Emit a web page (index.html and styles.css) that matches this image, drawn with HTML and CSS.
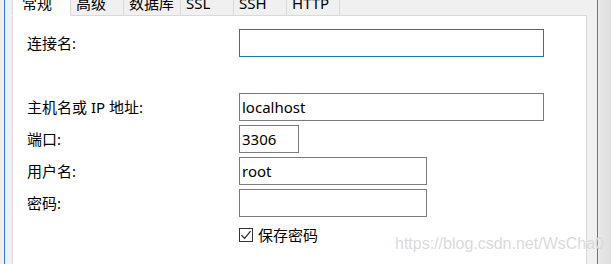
FILE: index.html
```html
<!DOCTYPE html>
<html lang="zh">
<head>
<meta charset="utf-8">
<title>连接</title>
<link rel="stylesheet" href="styles.css">
</head>
<body>
<div class="window">
  <div class="dialog">
    <div class="tabs">
      <div class="tab active"><span>常规</span></div>
      <div class="tab"><span>高级</span></div>
      <div class="tab wide"><span>数据库</span></div>
      <div class="tab"><span>SSL</span></div>
      <div class="tab"><span>SSH</span></div>
      <div class="tab"><span>HTTP</span></div>
      <div class="tab-fill"></div>
    </div>
    <div class="panel">
      <div class="form">
        <label class="lbl">连接名:</label>
        <div class="field w-full focus"></div>
        <div class="spacer"></div>
        <label class="lbl">主机名或 IP 地址:</label>
        <div class="field w-full">localhost</div>
        <label class="lbl">端口:</label>
        <div class="field w-port">3306</div>
        <label class="lbl">用户名:</label>
        <div class="field w-mid">root</div>
        <label class="lbl">密码:</label>
        <div class="field w-mid"></div>
        <div class="lbl"></div>
        <div class="check">
          <span class="box"><svg width="12" height="12" viewBox="0 0 12 12"><path d="M1.5 6.2 L4.6 9.4 L10.6 2.2" fill="none" stroke="#222" stroke-width="1.2"/></svg></span>
          <span>保存密码</span>
        </div>
      </div>
    </div>
  </div>
</div>
<div class="watermark">https://blog.csdn.net/WsCha0</div>
</body>
</html>
```
FILE: styles.css
```css
html, body {
  margin: 0;
  height: 264px;
  overflow: hidden;
}
body {
  position: relative;
  background: linear-gradient(to right, #f0f0f0 598px, #e6e6e6 600px, #dfdfdf 611px);
  font-family: "Noto Sans", "Noto Sans CJK SC", sans-serif;
  font-size: 15px;
  color: #000;
}
.window {
  margin-left: 4px;
  width: 594px;
  height: 264px;
  box-sizing: border-box;
  border-left: 1px solid #2a86d0;
  border-right: 1px solid #2a86d0;
  padding: 0 10px 0 7px;
  background: #f0f0f0;
}
.dialog {
  display: flex;
  flex-direction: column;
  height: 100%;
}
.tabs {
  display: flex;
  height: 16px;
  flex: none;
}
.tab {
  height: 16px;
  box-sizing: border-box;
  min-width: 53px;
  padding: 0 6px 0 5px;
  border-right: 1px solid #d9d9d9;
  border-bottom: 1px solid #d9d9d9;
  background: #f0f0f0;
  line-height: 20px;
  white-space: nowrap;
}
.tab span {
  display: block;
  margin-top: -7px;
}
.tab.active {
  width: 59px;
  padding-left: 9px;
  border-left: 1px solid #d9d9d9;
  background: #fff;
  border-bottom-color: #fff;
}
.tab-fill {
  flex: 1;
  height: 16px;
  box-sizing: border-box;
  border-bottom: 1px solid #d9d9d9;
}
.panel {
  flex: 1;
  background: #fff;
  border-left: 1px solid #d9d9d9;
  border-right: 1px solid #d9d9d9;
  padding: 13px 0 0 14px;
}
.form {
  display: grid;
  grid-template-columns: 212px 1fr;
  grid-auto-rows: 28px;
  row-gap: 4px;
  align-items: center;
}
.lbl {
  line-height: 20px;
  white-space: nowrap;
}
.spacer {
  grid-column: 1 / -1;
}
.field {
  height: 28px;
  box-sizing: border-box;
  border: 1px solid #7a7a7a;
  padding: 0 2px;
  line-height: 26px;
  background: #fff;
}
.field.focus {
  border-color: #1f74b4;
}
.w-full { width: 305px; }
.w-port { width: 60px; }
.w-mid { width: 188px; }
.check {
  display: flex;
  align-items: center;
  gap: 5px;
  line-height: 20px;
}
.box {
  width: 14px;
  height: 14px;
  box-sizing: border-box;
  border: 1px solid #333;
  display: flex;
  align-items: center;
  justify-content: center;
  background: #fff;
}
.watermark {
  position: absolute;
  left: 395px;
  top: 235px;
  font-family: "Liberation Sans", Arial, sans-serif;
  font-size: 16px;
  color: #dadada;
  white-space: nowrap;
}
```
